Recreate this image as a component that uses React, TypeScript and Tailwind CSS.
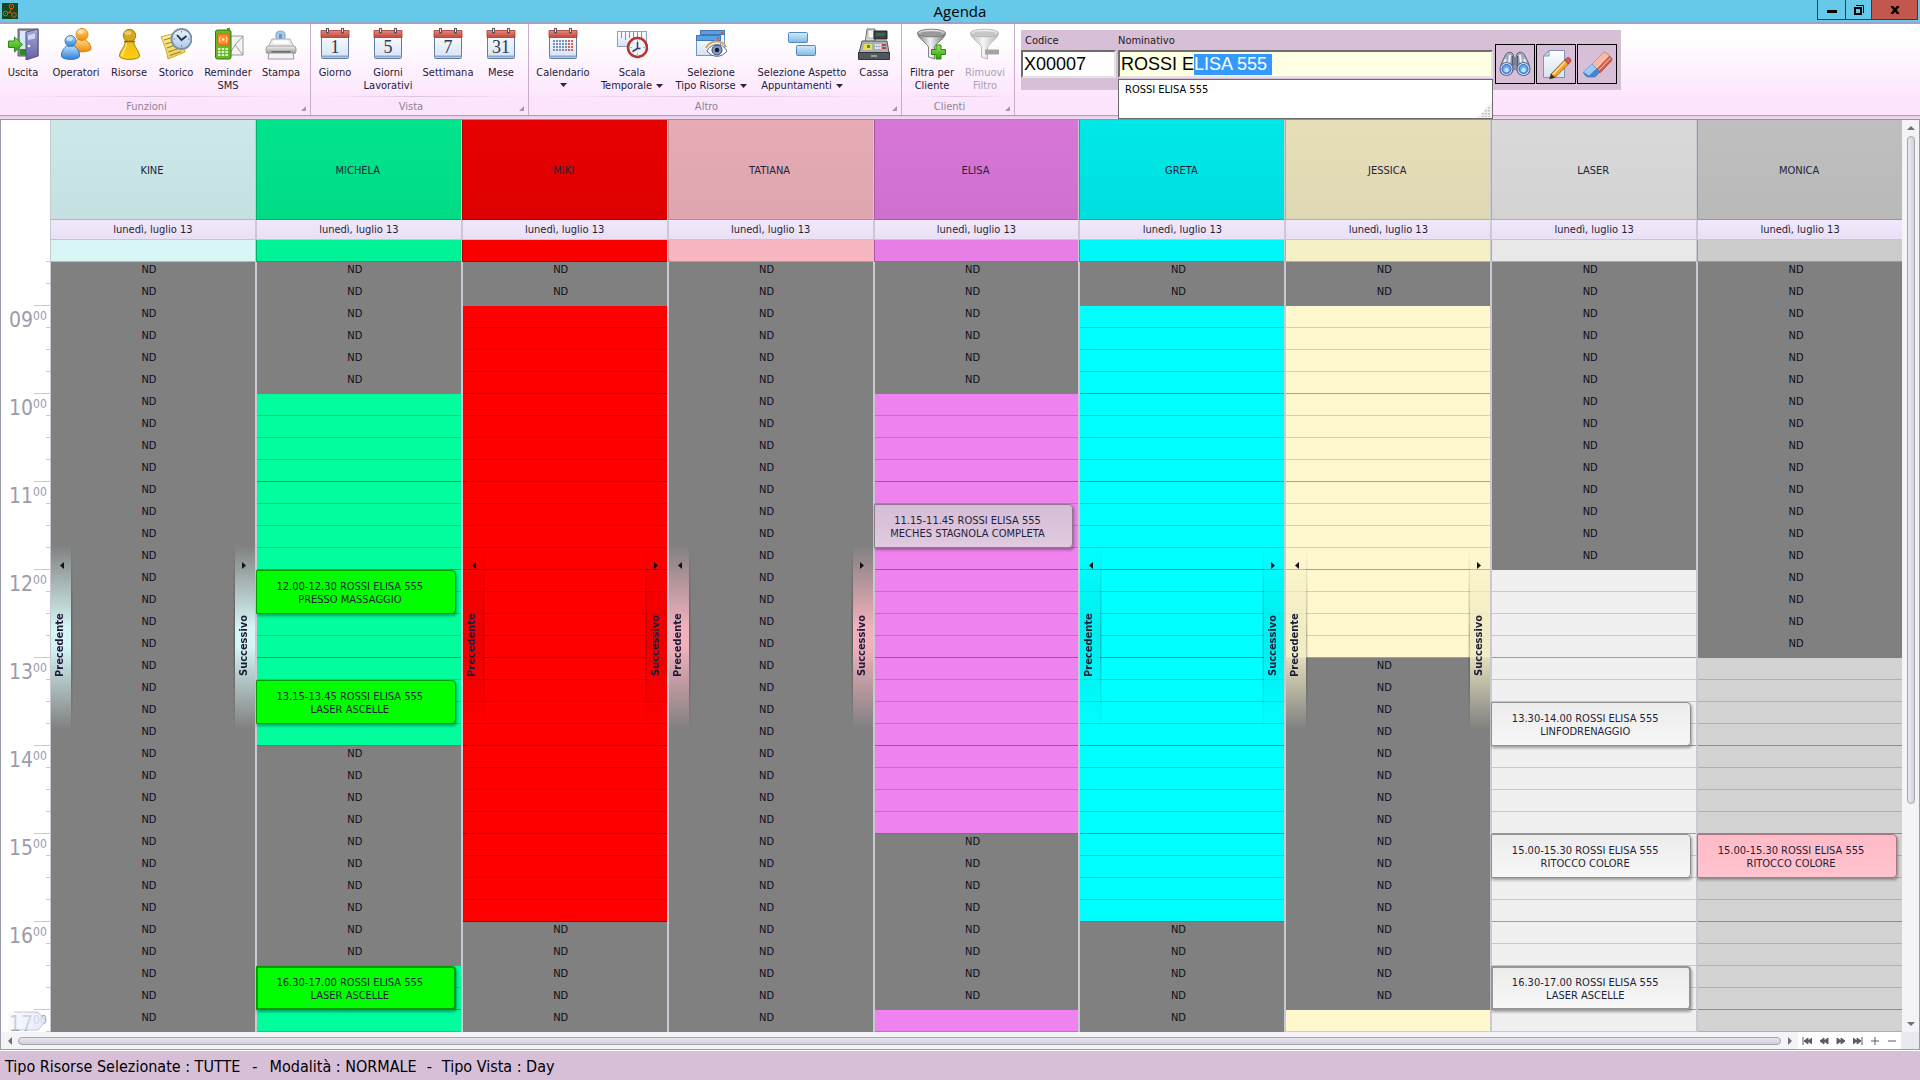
import { useEffect, useRef, type ReactNode } from "react";

const FIRST_SLOT = 8.5; // 08:30, 15-minute slots
const SLOT_COUNT = 35;

type Appointment = {
  slot: number;
  time: string;
  service: string;
  look: string;
};

type Resource = {
  name: string;
  head: string;
  allDay: string;
  free: string;
  line: string;
  hourLine: string;
  nav?: string;
  // [start, end) slot ranges that are bookable
  open: [number, number][];
  appointments?: Appointment[];
};

const greenLook = "border bg-[#00ff00] border-[#009c00]";
const whiteLook = "border bg-linear-to-b from-[#ececec] to-[#f7f7f7] border-[#8f8f8f]";

const resources: Resource[] = [
  {
    name: "KINE",
    head: "bg-linear-to-b from-[#cde8e8] to-[#c5e0e0] border-[#a5c0c0]",
    allDay: "bg-[#d8f6f6] border-[#a5c0c0]",
    free: "bg-[#e0ffff]",
    line: "border-[#b0d0d0]",
    hourLine: "border-[#90b0b0]",
    nav: "bg-[#d5f4f4]",
    open: [],
  },
  {
    name: "MICHELA",
    head: "bg-linear-to-b from-[#00e48c] to-[#00dc86] border-[#00b26c]",
    allDay: "bg-[#00f297] border-[#00b26c]",
    free: "bg-[#00ff9c]",
    line: "border-[#00d581]",
    hourLine: "border-[#00a866]",
    open: [[6, 22], [32, 35]],
    appointments: [
      { slot: 14, time: "12.00-12.30", service: "PRESSO MASSAGGIO", look: greenLook },
      { slot: 19, time: "13.15-13.45", service: "LASER ASCELLE", look: greenLook },
      { slot: 32, time: "16.30-17.00", service: "LASER ASCELLE", look: "border-2 bg-[#00ff00] border-[#009c00]" },
    ],
  },
  {
    name: "MIKI",
    head: "bg-linear-to-b from-[#e80000] to-[#de0000] border-[#b80000]",
    allDay: "bg-[#f80000] border-[#b80000]",
    free: "bg-[#ff0000]",
    line: "border-[#d50000]",
    hourLine: "border-[#a00000]",
    nav: "bg-[#ee0000]",
    open: [[2, 30]],
  },
  {
    name: "TATIANA",
    head: "bg-linear-to-b from-[#e6abb5] to-[#dfa6b0] border-[#b98a92]",
    allDay: "bg-[#f7b5c0] border-[#c8929b]",
    free: "bg-[#ffb6c1]",
    line: "border-[#d59aa4]",
    hourLine: "border-[#b0808a]",
    nav: "bg-[#f2b0bc]",
    open: [],
  },
  {
    name: "ELISA",
    head: "bg-linear-to-b from-[#d776d7] to-[#cf70cf] border-[#a85ba8]",
    allDay: "bg-[#e67ee6] border-[#a85ba8]",
    free: "bg-[#ee82ee]",
    line: "border-[#c76dc7]",
    hourLine: "border-[#a055a0]",
    open: [[6, 26], [34, 35]],
    appointments: [
      {
        slot: 11,
        time: "11.15-11.45",
        service: "MECHES STAGNOLA COMPLETA",
        look: "border bg-linear-to-b from-[#d6bdd6] to-[#dfcadf] border-[#8e7a8e]",
      },
    ],
  },
  {
    name: "GRETA",
    head: "bg-linear-to-b from-[#00e8e8] to-[#00dfdf] border-[#00b4b4]",
    allDay: "bg-[#00f7f7] border-[#00b4b4]",
    free: "bg-[#00ffff]",
    line: "border-[#00d5d5]",
    hourLine: "border-[#00a5a5]",
    nav: "bg-[#00eeee]",
    open: [[2, 30]],
  },
  {
    name: "JESSICA",
    head: "bg-linear-to-b from-[#e6dfb9] to-[#dfd8b4] border-[#b8b294]",
    allDay: "bg-[#f6f0c6] border-[#b8b294]",
    free: "bg-[#fff8cf]",
    line: "border-[#d5cfac]",
    hourLine: "border-[#a8a488]",
    nav: "bg-[#f2ecc4]",
    open: [[2, 18], [34, 35]],
  },
  {
    name: "LASER",
    head: "bg-linear-to-b from-[#d9d9d9] to-[#d3d3d3] border-[#adadad]",
    allDay: "bg-[#e8e8e8] border-[#adadad]",
    free: "bg-[#f0f0f0]",
    line: "border-[#c8c8c8]",
    hourLine: "border-[#9c9c9c]",
    open: [[14, 35]],
    appointments: [
      { slot: 20, time: "13.30-14.00", service: "LINFODRENAGGIO", look: whiteLook },
      { slot: 26, time: "15.00-15.30", service: "RITOCCO COLORE", look: whiteLook },
      {
        slot: 32,
        time: "16.30-17.00",
        service: "LASER ASCELLE",
        look: "border-2 bg-linear-to-b from-[#ececec] to-[#f7f7f7] border-[#969696]",
      },
    ],
  },
  {
    name: "MONICA",
    head: "bg-linear-to-b from-[#bfbfbf] to-[#b9b9b9] border-[#989898]",
    allDay: "bg-[#cccccc] border-[#989898]",
    free: "bg-[#d3d3d3]",
    line: "border-[#b0b0b0]",
    hourLine: "border-[#8c8c8c]",
    open: [[18, 35]],
    appointments: [
      {
        slot: 26,
        time: "15.00-15.30",
        service: "RITOCCO COLORE",
        look: "border bg-linear-to-b from-[#ffbac6] to-[#ffc4ce] border-[#a07880]",
      },
    ],
  },
];

const slots = Array.from({ length: SLOT_COUNT }, (_, i) => i);

/* ---------- icons ---------- */

function Gradients() {
  const defs: [string, string, string][] = [
    ["gBlue", "#b9defc", "#2f7fd6"],
    ["gOrange", "#ffd98a", "#f08a00"],
    ["gGold", "#e8bc20", "#ffcf10"],
    ["gGreen", "#8fe45a", "#2f9e12"],
    ["gDoor", "#a9a9dc", "#6262a4"],
    ["gRed", "#e8877c", "#c2473c"],
    ["gPaper", "#ffffff", "#d5e2f2"],
    ["gGray", "#f4f4f4", "#8c8c8c"],
    ["gSky", "#d6ecfb", "#7db8e6"],
    ["gNote", "#fdf3a8", "#eed04c"],
    ["gClock", "#eef5fc", "#a9c6e6"],
  ];
  return (
    <svg className="absolute h-0 w-0" aria-hidden="true">
      <defs>
        {defs.map(([id, from, to]) => (
          <linearGradient key={id} id={id} x1="0" y1="0" x2="0" y2="1">
            <stop offset="0" stopColor={from} />
            <stop offset="1" stopColor={to} />
          </linearGradient>
        ))}
        <linearGradient id="gSteel" x1="0" y1="0" x2="1" y2="0">
          <stop offset="0" stopColor="#7d7d7d" />
          <stop offset=".45" stopColor="#f2f2f2" />
          <stop offset="1" stopColor="#757575" />
        </linearGradient>
      </defs>
    </svg>
  );
}

function Icon({ children }: { children: ReactNode }) {
  return (
    <svg viewBox="0 0 32 32" className="h-8 w-8 shrink-0" aria-hidden="true">
      {children}
    </svg>
  );
}

const ExitIcon = () => (
  <Icon>
    <path d="M11 1h20v27H11z" fill="#8d8f9c" stroke="#5c5e6c" />
    <path d="M13 3h9v23h-9z" fill="#d4e8fb" />
    <path d="M13 21h6v6h-6z" fill="#2f8a1c" />
    <path d="M19 4l12-3v27l-12 4z" fill="url(#gDoor)" stroke="#50508a" />
    <path d="M21.500 7.500l6-1.500v4l-6 1.500z" fill="#c9d6f6" stroke="#ececff" strokeWidth=".6" />
    <circle cx="22" cy="18" r="1.300" fill="#efeffa" />
    <path d="M1.500 13h6V9l8 7.500-8 7.500v-4.500h-6z" fill="url(#gGreen)" stroke="#2c8a16" />
  </Icon>
);

const PeopleIcon = () => (
  <Icon>
    <path d="M13 22c0-7 3-8.500 5-10.500h7c2 2 6 4 6 9.500 0 3-18 4-18 1z" fill="url(#gOrange)" stroke="#d87400" />
    <circle cx="22" cy="6.500" r="6" fill="url(#gOrange)" stroke="#e08a10" />
    <path d="M1.500 28c0-6 3-8 5-10h8c2 2 5 4 5 10 0 4.500-18 4.500-18 0z" fill="url(#gBlue)" stroke="#2e72c2" />
    <circle cx="10.500" cy="13" r="5.500" fill="url(#gBlue)" stroke="#3f84cc" />
    <ellipse cx="9.500" cy="11" rx="3" ry="2" fill="#fff" opacity=".55" />
    <ellipse cx="20.500" cy="4" rx="3" ry="2" fill="#fff" opacity=".5" />
  </Icon>
);

const PawnIcon = () => (
  <Icon>
    <path d="M12.500 13h8c0 5 6 10 6 15 0 4.500-20 4.500-20 0 0-5 6-10 6-15z" fill="url(#gGold)" stroke="#a87c00" />
    <path d="M13.500 15c0 5-4 8-4.500 13" fill="none" stroke="#fff2a0" strokeWidth="1.500" opacity=".7" />
    <circle cx="16.500" cy="7.500" r="6.200" fill="#d9a818" stroke="#a87c00" />
    <ellipse cx="15" cy="5" rx="3.500" ry="2" fill="#fff" opacity=".4" />
    <path d="M11 13.500h11" stroke="#8e6800" strokeWidth="1.500" />
  </Icon>
);

const HistoryIcon = () => (
  <Icon>
    <path d="M0 0h32v32H0z" fill="#fff" />
    <path d="M1 9l18-5 6 20-17 7c-1-8-4-15-7-22z" fill="url(#gNote)" stroke="#c9a83a" />
    <path d="M4 12l13-4M5.500 16l13-4M7 20l14-5M8.500 24l14-5M10 27.500l11-4" stroke="#9a8034" strokeWidth="1.200" />
    <circle cx="21.500" cy="11" r="10" fill="url(#gClock)" stroke="#7d8ea8" strokeWidth="1.800" />
    <path d="M17 7l4.500 5 5-4" fill="none" stroke="#1e2c4c" strokeWidth="1.800" />
    <path d="M21.500 3v1.500M29.500 11H28M21.500 19v-1.500M13.500 11H15" stroke="#6c7f9e" />
  </Icon>
);

const PhoneIcon = () => (
  <Icon>
    <path d="M17 8h14v19H17z" fill="#f4f4f4" stroke="#9a9a9a" />
    <path d="M31 8l-8 9 8 10M17 27l6-10" fill="none" stroke="#9a9a9a" />
    <path d="M15 0h3v4h-3z" fill="#55a01c" />
    <rect x="3.500" y="2" width="15.500" height="29" rx="2" fill="#68b82a" stroke="#2f7a10" />
    <rect x="5.500" y="6" width="11.500" height="11" rx="1" fill="#ff8a2a" stroke="#d86400" />
    <circle cx="11.200" cy="11.500" r="1.300" fill="#fff" />
    <path d="M8.500 9c-1.300 1.500-1.300 3.500 0 5M14 9c1.300 1.500 1.300 3.500 0 5" fill="none" stroke="#fff" />
    <path d="M6 21h10M6 24h10M6 27h10" stroke="#dff2c8" strokeWidth="1.800" strokeDasharray="2.500 1.200" />
  </Icon>
);

const PrinterIcon = () => (
  <Icon>
    <path d="M11 12V6c0-4 9-4 9 0v6z" fill="#a8c8ea" stroke="#7fa4cc" />
    <path d="M14 6h3v5h-3z" fill="#6c94c4" />
    <path d="M7 11h18l4 8H3z" fill="#ececec" stroke="#b0b0b0" />
    <path d="M9 12.500h14l1 3H8z" fill="#fff" />
    <rect x="1" y="18" width="30" height="8" rx="3" fill="url(#gGray)" stroke="#a0a0a0" />
    <path d="M6 23h20l-1 2H7z" fill="#6a6a6a" />
    <path d="M4 25h24l1 6H3z" fill="#f4f4f4" stroke="#9a9a9a" />
  </Icon>
);

function CalendarBase({ children }: { children: ReactNode }) {
  return (
    <Icon>
      <rect x="2.500" y="3.500" width="27" height="27" rx="1" fill="url(#gPaper)" stroke="#5f7ba8" />
      <path d="M2.500 28.500h27" stroke="#8ba6cf" strokeWidth="2" />
      <path d="M2 2.500h28v7H2z" fill="url(#gRed)" stroke="#a8372e" strokeWidth=".8" />
      <path d="M8.500 0v5.500M23.500 0v5.500" stroke="#55575f" strokeWidth="3" />
      <path d="M8.500 1v3M23.500 1v3" stroke="#e8e8ec" />
      {children}
    </Icon>
  );
}

const DayIcon = ({ day }: { day: string }) => (
  <CalendarBase>
    <text x="16" y="25" textAnchor="middle" fontSize="18" fill="#2e3a50" className="font-['Liberation_Serif',serif]">
      {day}
    </text>
  </CalendarBase>
);

const MonthIcon = () => (
  <CalendarBase>
    <path d="M6 13h15M6 16h15M6 19h15M6 22h15" stroke="#7b90b8" strokeWidth="2" strokeDasharray="2 1" />
    <path d="M21 13h5M21 16h5M21 19h5M21 22h5" stroke="#e0604c" strokeWidth="2" strokeDasharray="2 1" />
  </CalendarBase>
);

const ScaleIcon = () => (
  <Icon>
    <rect x="1.500" y="3.500" width="29" height="15" fill="url(#gPaper)" stroke="#8aa0c4" />
    <path d="M5.500 4v6M9.500 4v8M13.500 4v6M17.500 4v6M21.500 4v8M25.500 4v6" stroke="#7f93b6" />
    <circle cx="21.500" cy="19.500" r="9.500" fill="#eef4fb" stroke="#b8352c" strokeWidth="2.500" />
    <path d="M21.500 20.500V14M21.500 20.500l-5 3M21.500 20.500h3" stroke="#34425e" strokeWidth="1.500" />
    <path d="M21.500 12.500v1M28.500 19.500h-1M21.500 26.500v-1M14.500 19.500h1" stroke="#c85048" />
  </Icon>
);

const ViewIcon = () => (
  <Icon>
    <rect x="5.500" y="2.500" width="24" height="20" fill="#eaf2fb" stroke="#6d96c6" />
    <path d="M5.500 2.500h24v4h-24z" fill="#5e9ede" stroke="#3f78b8" />
    <rect x="1.500" y="7.500" width="24" height="20" fill="url(#gPaper)" stroke="#6d96c6" />
    <path d="M1.500 7.500h24v5h-24z" fill="#5aa0e4" stroke="#3f78b8" />
    <path d="M22 9h2v2h-2zM26 4h2v2h-2z" fill="#e4502c" />
    <path d="M12 23c4-8 15-9 20 0-5 7-15 7-20 0z" fill="#fff" stroke="#56667e" />
    <path d="M11 20c4-8 16-9 20-1" fill="none" stroke="#d8a468" strokeWidth="2" />
    <circle cx="22" cy="22" r="5" fill="#7f9ac4" stroke="#3c4c6a" />
    <circle cx="22" cy="22" r="2.200" fill="#141c2e" />
  </Icon>
);

const AspectIcon = () => (
  <Icon>
    <rect x="2.500" y="4.500" width="19" height="10" rx="1" fill="url(#gSky)" stroke="#4f8ac0" />
    <rect x="10.500" y="17.500" width="19" height="10" rx="1" fill="url(#gSky)" stroke="#4f8ac0" />
  </Icon>
);

const CashIcon = () => (
  <Icon>
    <path d="M7 15L9 1h8v14z" fill="#d4d8dc" stroke="#70767c" />
    <path d="M10 2h6v8h-6z" fill="#f6f6f6" stroke="#a0a0a0" strokeWidth=".6" />
    <path d="M16 3h13v8H16z" fill="#3a4246" stroke="#20262a" />
    <path d="M18 5h9v3h-9z" fill="#2f6e40" />
    <path d="M4 13h25l2 12H1z" fill="#aab0b6" stroke="#4c5258" />
    <path d="M6 16h8v6H5z" fill="#e8e054" />
    <path d="M9 17h3v3H9z" fill="#3c9c3c" />
    <path d="M17 17h6M17 20h6" stroke="#eef2f6" strokeWidth="2" strokeDasharray="1.500 .7" />
    <path d="M24 17h4M24 20h4" stroke="#cc3c34" strokeWidth="2" />
    <path d="M.5 24.500h31v7H.5z" fill="#50585e" stroke="#2e3438" />
    <path d="M13 28h6" stroke="#dfe3e6" />
  </Icon>
);

const FunnelIcon = ({ add }: { add?: boolean }) => (
  <Icon>
    <g opacity={add ? 1 : 0.55}>
      <path d="M1.500 5c0 5 10 11 11 14v10l6 2V19c1-3 11-9 11-14z" fill="url(#gSteel)" stroke="#6a6a6a" strokeWidth=".8" />
      <ellipse cx="15.500" cy="5" rx="14" ry="3.800" fill="url(#gGray)" stroke="#7a7a7a" />
      <ellipse cx="15.500" cy="5.500" rx="11" ry="2.300" fill="#9a9a9a" />
    </g>
    {add ? (
      <path d="M20 17h5v4.500h4.500v5H25V31h-5v-4.500h-4.500v-5H20z" fill="url(#gGreen)" stroke="#2c8a16" />
    ) : (
      <path d="M16 21.500h14v5H16z" fill="#a4a4a4" />
    )}
  </Icon>
);

const BinocularsIcon = () => (
  <Icon>
    <path d="M6 8c1-4 6-5 8-2l1 4v12H1.500C1 17 4 12 6 8zM26 8c-1-4-6-5-8-2l-1 4v12h13.500C31 17 28 12 26 8z" fill="#a4abbc" stroke="#586078" />
    <path d="M7 11l-4 8M11 7l-1 8M21 7l1 8M25 11l4 8" stroke="#eef1f7" strokeWidth="2" />
    <path d="M13.500 8v10M18.500 8v10" stroke="#565c70" strokeWidth="1.500" />
    <path d="M14 9h4v8h-4z" fill="#7b8296" />
    <circle cx="7.500" cy="21" r="6.500" fill="#dfe8f6" stroke="#5b6a90" strokeWidth="1.200" />
    <circle cx="24.500" cy="21" r="6.500" fill="#dfe8f6" stroke="#5b6a90" strokeWidth="1.200" />
    <circle cx="7.500" cy="21" r="4.500" fill="#6fa3f0" stroke="#2c5cc4" />
    <circle cx="24.500" cy="21" r="4.500" fill="#5cb0f0" stroke="#2c62c4" />
    <circle cx="7.500" cy="22" r="2.200" fill="#c8e0ff" />
    <circle cx="24.500" cy="22" r="2.200" fill="#c4eaff" />
  </Icon>
);

const EditIcon = () => (
  <Icon>
    <path d="M9 2.500h15.500v27h-21V8z" fill="url(#gPaper)" stroke="#7f94b8" />
    <path d="M9 2.500V8H3.500z" fill="#c8d8ee" stroke="#7f94b8" />
    <path d="M11 26L24.500 12l4 4-13.500 13.500z" fill="#f6a42e" stroke="#8c5a14" strokeWidth=".8" />
    <path d="M12.500 27L25.500 13.500" stroke="#ffe09a" strokeWidth="1.500" />
    <path d="M24.500 12l3-2.500c1.500-.5 4 2 3.500 3.500L28.500 16z" fill="#d8584a" stroke="#8e3028" strokeWidth=".7" />
    <path d="M9.500 31l1.500-5 4 3.500z" fill="#3a2c20" stroke="#5a4028" strokeWidth=".6" />
  </Icon>
);

const EraserIcon = () => (
  <Icon>
    <path d="M11 16L22 5c1.500-1 2-1 3.500 0l5 5c.7 1 .7 2 0 3L19 25z" fill="#d65a48" stroke="#b04436" strokeWidth=".6" />
    <path d="M11 16L22 5c1.500-1 2-1 3.500 0l2.500 3-12 12.500z" fill="#f8b8a4" />
    <path d="M15 20L27 7.500M17 23L29.500 10" stroke="#fbd8cc" />
    <path d="M2.500 24l8.500-8 8 8-5 5H6.500c-2-1-3.500-2.500-4-5z" fill="#4a86d0" stroke="#3468ac" strokeWidth=".6" />
    <path d="M2.500 24l8.500-8 4.500 4.500L8 27.500z" fill="#9accf6" />
  </Icon>
);

/* ---------- ribbon ---------- */

function Caret({ className = "" }: { className?: string }) {
  return (
    <svg viewBox="0 0 7 4" className={`h-1 w-[7px] ${className}`} aria-hidden="true">
      <path d="M0 0h7L3.500 4z" fill="#2b2340" />
    </svg>
  );
}

type ToolProps = {
  icon: ReactNode;
  lines: string[];
  width: string;
  menu?: boolean;
  disabled?: boolean;
};

function Tool({ icon, lines, width, menu, disabled }: ToolProps) {
  return (
    <button
      type="button"
      disabled={disabled}
      className={`flex flex-col items-center whitespace-nowrap pt-1 leading-[13px] ${width} ${
        disabled ? "text-[#a79fb0]" : "text-[#1f1a38]"
      }`}
    >
      {icon}
      <span className="mt-1.5">{lines[0]}</span>
      {lines[1] ? (
        <span className="flex items-center gap-1">
          {lines[1]}
          {menu && <Caret />}
        </span>
      ) : (
        menu && <Caret className="mt-1" />
      )}
    </button>
  );
}

function Group({ title, pad, width, children }: { title: string; pad: string; width: string; children: ReactNode }) {
  return (
    <section className={`flex shrink-0 flex-col border-r border-[#c9a9cc] ${width}`}>
      <div className={`flex h-[72px] ${pad}`}>{children}</div>
      <div className="mx-2 h-px bg-linear-to-r from-transparent via-[#d9c6dc] to-transparent" />
      <div className="flex flex-1 items-end">
        <h2 className="flex-1 self-center pt-0.5 pr-2 text-center text-[#8b8494]">{title}</h2>
        <svg viewBox="0 0 5 5" className="mr-1 mb-1 h-[5px] w-[5px]" aria-hidden="true">
          <path d="M5 0v5H0z" fill="#a596ac" />
        </svg>
      </div>
    </section>
  );
}

function ClientSearch() {
  const nameRef = useRef<HTMLInputElement>(null);

  useEffect(() => {
    nameRef.current?.focus();
    nameRef.current?.setSelectionRange(7, 16);
  }, []);

  const field =
    "h-7 w-full border-2 border-t-[#6d6d6d] border-l-[#6d6d6d] border-r-[#e3e3e3] border-b-[#e3e3e3] pl-px font-['Liberation_Sans',Arial,sans-serif] text-lg leading-6 text-black outline-none";
  const square = "flex h-10 w-10 items-center justify-center border border-black";

  return (
    <div className="mt-1.5 ml-1.5 flex h-[60px] bg-[#d8bfd8] pr-1 text-[#1a1a1a]">
      <div className="w-[95px]">
        <label htmlFor="codice" className="block h-5 pt-px pl-1 leading-5">Codice</label>
        <input id="codice" defaultValue="X00007" className={`${field} bg-white`} />
      </div>
      <div className="relative ml-0.5 w-[375px]">
        <label htmlFor="nominativo" className="block h-5 pt-px leading-5">Nominativo</label>
        <input
          id="nominativo"
          ref={nameRef}
          defaultValue="ROSSI ELISA 555 "
          autoComplete="off"
          className={`${field} bg-[#ffffe1] selection:bg-[#3399ff] selection:text-white`}
        />
        <ul
          role="listbox"
          className="absolute top-[49px] left-0 z-10 h-10 w-full border border-[#6a6a6a] bg-white px-1.5 leading-5 text-black"
        >
          <li role="option" aria-selected="false">ROSSI ELISA 555</li>
          <svg viewBox="0 0 16 16" className="absolute right-0 bottom-0 h-4 w-4" aria-hidden="true">
            <path d="M16 0v16H0z" fill="#f0f0f0" />
            <path d="M13 5v10M10 8v7M7 11v4" stroke="#b4b4b4" strokeWidth="1.500" strokeDasharray="1.500 1.500" />
          </svg>
        </ul>
      </div>
      <div className="mt-3.5 ml-0.5 flex gap-px">
        <button type="button" aria-label="Cerca cliente" className={square}><BinocularsIcon /></button>
        <button type="button" aria-label="Modifica cliente" className={square}><EditIcon /></button>
        <button type="button" aria-label="Cancella" className={square}><EraserIcon /></button>
      </div>
    </div>
  );
}

function Ribbon() {
  return (
    <div className="h-24">
      <div className="flex h-[92px] border-b border-[#b39cb8] bg-linear-to-b from-white from-15% to-[#fde4fd] to-85%">
        <Group title="Funzioni" pad="pl-[3px]" width="w-[311px]">
          <Tool icon={<ExitIcon />} lines={["Uscita"]} width="w-10" />
          <Tool icon={<PeopleIcon />} lines={["Operatori"]} width="w-[66px]" />
          <Tool icon={<PawnIcon />} lines={["Risorse"]} width="w-10" />
          <Tool icon={<HistoryIcon />} lines={["Storico"]} width="w-[54px]" />
          <Tool icon={<PhoneIcon />} lines={["Reminder", "SMS"]} width="w-[50px]" />
          <Tool icon={<PrinterIcon />} lines={["Stampa"]} width="w-14" />
        </Group>
        <Group title="Vista" pad="pl-0" width="w-[218px]">
          <Tool icon={<DayIcon day="1" />} lines={["Giorno"]} width="w-12" />
          <Tool icon={<DayIcon day="5" />} lines={["Giorni", "Lavorativi"]} width="w-[58px]" />
          <Tool icon={<DayIcon day="7" />} lines={["Settimana"]} width="w-[62px]" />
          <Tool icon={<DayIcon day="31" />} lines={["Mese"]} width="w-11" />
        </Group>
        <Group title="Altro" pad="pl-1" width="w-[373px]">
          <Tool icon={<MonthIcon />} lines={["Calendario"]} width="w-[60px]" menu />
          <Tool icon={<ScaleIcon />} lines={["Scala", "Temporale"]} width="w-[78px]" menu />
          <Tool icon={<ViewIcon />} lines={["Selezione", "Tipo Risorse"]} width="w-20" menu />
          <Tool icon={<AspectIcon />} lines={["Selezione Aspetto", "Appuntamenti"]} width="w-[102px]" menu />
          <Tool icon={<CashIcon />} lines={["Cassa"]} width="w-[42px]" />
        </Group>
        <Group title="Clienti" pad="pl-[3px]" width="w-[113px]">
          <Tool icon={<FunnelIcon add />} lines={["Filtra per", "Cliente"]} width="w-[54px]" />
          <Tool icon={<FunnelIcon />} lines={["Rimuovi", "Filtro"]} width="w-[52px]" disabled />
        </Group>
        <ClientSearch />
      </div>
      <div className="h-1 border-b border-[#958fa2] bg-linear-to-b from-[#e3c8e3] to-[#f3dff3]" />
    </div>
  );
}

/* ---------- scheduler ---------- */

function TimeAxis() {
  return (
    <div className="relative w-[50px] shrink-0 border-r border-[#c8c8d2] bg-white text-[#9c9caa]">
      <div className="flex h-[142px] items-end justify-end">
        <div className="h-px w-1 bg-[#c8c8d2]" />
      </div>
      {slots.map((i) => (
        <div key={i} className="flex h-[22px] items-end justify-end">
          {i % 4 === 2 && (
            <div className="flex flex-1 self-start pt-1 pl-2">
              <span className="text-[21px] leading-[20px]">{String(FIRST_SLOT + i / 4).padStart(2, "0")}</span>
              <span className="text-xs leading-3">00</span>
            </div>
          )}
          <div className={`h-px bg-[#c8c8d2] ${i % 4 === 1 ? "w-4" : "w-1"} ${i % 4 === 2 ? "-ml-1" : ""}`} />
        </div>
      ))}
      <svg viewBox="0 0 40 22" className="absolute right-0.5 bottom-0 h-[22px] w-10" aria-hidden="true">
        <defs>
          <linearGradient id="now" x1="0" y1="0" x2="1" y2="0">
            <stop offset="0" stopColor="#f4f6fc" stopOpacity=".5" />
            <stop offset="1" stopColor="#dfe5fa" stopOpacity=".85" />
          </linearGradient>
        </defs>
        <path d="M0 2h30l8 9-8 9H0z" fill="url(#now)" />
        <path d="M6 2h24l8 9-8 9H6" fill="none" stroke="#a8b0c8" opacity=".7" />
      </svg>
    </div>
  );
}

function SideNav({ side, label, color }: { side: "left" | "right"; label: string; color: string }) {
  const left = side === "left";
  return (
    <button
      type="button"
      aria-label={label}
      className={`absolute top-[283px] h-[184px] w-[22px] ${left ? "left-0" : "right-0"}`}
    >
      <div
        className={`absolute inset-0 overflow-hidden mask-[linear-gradient(to_bottom,transparent,black_45%,black_55%,transparent)] ${
          left ? "pr-0.5" : "pl-0.5"
        }`}
      >
        <div className={`h-full shadow-[0_0_3px_rgba(0,0,0,0.6)] ${color}`} />
      </div>
      <div className="relative flex h-full flex-col items-center pt-[17px]">
        <svg viewBox="0 0 4 7" className="h-[7px] w-1" aria-hidden="true">
          <path d={left ? "M4 0v7L0 3.500z" : "M0 0v7l4-3.500z"} fill="#111" />
        </svg>
        <span
          className={`absolute top-[68px] flex h-[64px] w-3.5 rotate-180 items-center justify-center font-bold leading-3.5 text-[#1c1a36] [writing-mode:vertical-rl] ${
            left ? "left-0.5" : "left-1"
          }`}
        >
          {label}
        </span>
      </div>
    </button>
  );
}

function Column({ r }: { r: Resource }) {
  const isOpen = (i: number) => r.open.some(([a, b]) => i >= a && i < b);

  return (
    <div className="min-w-0 flex-1 border-r-2 border-[#cac8d2] last:border-r-0">
      <div className={`-ml-px flex h-[100px] items-center justify-center border-b border-l pt-1 pr-0.5 text-[#23233a] ${r.head}`}>
        {r.name}
      </div>
      <div className="flex h-5 items-center justify-center border-b border-[#c8c5d2] bg-linear-to-b from-[#f0e8fa] to-[#eae0f6] pt-0.5 text-[#1f1f38]">
        lunedì, luglio 13
      </div>
      <div className={`-ml-px h-[22px] border-b border-l ${r.allDay}`} />
      <div className="relative">
        {slots.map((i) =>
          isOpen(i) ? (
            <div key={i} className={`h-[22px] border-b ${r.free} ${i % 4 === 1 ? r.hourLine : r.line}`} />
          ) : (
            <div key={i} className="h-[22px] bg-[#808080] pr-2 text-center leading-[15px] text-[#0c0c18]">
              ND
            </div>
          ),
        )}
        {r.appointments?.map((a) => (
          <div
            key={a.slot}
            style={{ top: a.slot * 22 }}
            className={`absolute right-[5px] -left-px flex h-11 flex-col justify-center rounded-r pt-0.5 pr-3 text-center leading-[13px] whitespace-nowrap text-[#1f1f38] shadow-[1px_2px_3px_rgba(0,0,0,0.35)] ${a.look}`}
          >
            <span>{a.time} ROSSI ELISA 555</span>
            <span>{a.service}</span>
          </div>
        ))}
        {r.nav && <SideNav side="left" label="Precedente" color={r.nav} />}
        {r.nav && <SideNav side="right" label="Successivo" color={r.nav} />}
      </div>
    </div>
  );
}

const pagerIcons: [string, string][] = [
  ["Inizio", "M1 1v8M6 2v6L2 5zM10 2v6L6 5z"],
  ["Indietro", "M5 2v6L1 5zM9 2v6L5 5z"],
  ["Avanti", "M1 2v6l4-3zM5 2v6l4-3z"],
  ["Fine", "M0 2v6l4-3zM4 2v6l4-3zM9 1v8"],
  ["Aggiungi", "M5 1v8M1 5h8"],
  ["Togli", "M1 5h8"],
];

function Arrow({ d }: { d: string }) {
  return (
    <svg viewBox="0 0 8 8" className="h-2 w-2" aria-hidden="true">
      <path d={d} fill="#6f6f80" />
    </svg>
  );
}

function Scheduler() {
  return (
    <main className="flex flex-1 flex-col border-x border-b border-[#9a9aa8]">
      <div className="flex flex-1">
        <TimeAxis />
        <div className="flex min-w-0 flex-1">
          {resources.map((r) => (
            <Column key={r.name} r={r} />
          ))}
        </div>
        <div className="flex w-[17px] shrink-0 flex-col items-center bg-[#f4f4f7] py-1">
          <Arrow d="M4 2l4 4H0z" />
          <div className="mt-1 h-[668px] w-2 rounded-full border border-[#a4a4b2] bg-linear-to-r from-[#e8e8ee] to-[#d4d4dc]" />
          <div className="flex-1" />
          <Arrow d="M4 6l4-4H0z" />
        </div>
      </div>
      <div className="flex h-[17px] items-center bg-[#f4f4f6]">
        <div className="flex w-[17px] justify-center">
          <Arrow d="M2 4l4-4v8z" />
        </div>
        <div className="h-2 flex-1 rounded-full border border-[#a4a4b2] bg-linear-to-b from-[#e8e8ee] to-[#cfcfd8]" />
        <div className="flex w-[17px] justify-center">
          <Arrow d="M6 4L2 0v8z" />
        </div>
        <div className="flex h-full items-center bg-white pr-px">
          {pagerIcons.map(([label, d]) => (
            <button key={label} type="button" aria-label={label} className="flex w-[17px] justify-center">
              <svg viewBox="0 0 10 10" className="h-2.5 w-2.5" aria-hidden="true">
                <path d={d} fill="#5a5a66" stroke="#5a5a66" />
              </svg>
            </button>
          ))}
        </div>
        <div className="h-full w-[18px] bg-[#e9e9f0]" />
      </div>
    </main>
  );
}

function TitleBar() {
  return (
    <header className="relative flex h-6 items-start justify-between border-b-2 border-[#9aa4c6] bg-[#66c9ea]">
      <svg viewBox="0 0 16 16" className="mt-[3px] ml-0.5 h-4 w-4" aria-hidden="true">
        <path d="M0 0h16v16H0z" fill="#14461f" />
        <g fill="none" stroke="#d2601c">
          <circle cx="9.500" cy="3.500" r="2.300" />
          <circle cx="3.500" cy="10.500" r="2.300" />
          <circle cx="12" cy="12" r="2.300" />
          <path d="M9.500 5.500L8 9M5.500 10l3-1 2 2M9.500 3v1M3.500 10v1M12 12v.5" />
        </g>
      </svg>
      <h1 className="absolute inset-x-0 text-center font-['Open_Sans','Noto_Sans',sans-serif] text-[15px] leading-[22px] text-black">
        Agenda
      </h1>
      <div className="relative mr-0.5 flex h-5 border-x border-b border-[#27404a]">
        <button type="button" aria-label="Riduci a icona" className="flex w-7 items-end justify-center border-r border-[#27404a] pb-1.5">
          <span className="h-[3px] w-2.5 bg-black" />
        </button>
        <button type="button" aria-label="Ripristina" className="flex w-[25px] items-center justify-center">
          <svg viewBox="0 0 10 10" className="h-2.5 w-2.5" aria-hidden="true">
            <path d="M1 3h6v6H1z" fill="none" stroke="#000" strokeWidth="2" />
            <path d="M2 .5h7.500V8" fill="none" stroke="#000" />
          </svg>
        </button>
        <button type="button" aria-label="Chiudi" className="flex w-[46px] items-center justify-center border-l border-[#27404a] bg-[#c2574d]">
          <svg viewBox="0 0 10 8" className="h-2 w-2.5" aria-hidden="true">
            <path d="M1.500 0l7 8M8.500 0l-7 8" stroke="#000" strokeWidth="2.500" />
          </svg>
        </button>
      </div>
    </header>
  );
}

export default function App() {
  return (
    <div className="flex min-h-screen flex-col bg-white font-['DejaVu_Sans_Condensed','Noto_Sans',sans-serif] text-[11px]">
      <Gradients />
      <TitleBar />
      <Ribbon />
      <Scheduler />
      <footer className="mt-px flex h-[29px] items-center gap-2.5 bg-[#d8bfd8] pt-0.5 pl-[5px] text-base text-black">
        <span>Tipo Risorse Selezionate : TUTTE</span>
        <span className="px-0.5">-</span>
        <span>Modalità : NORMALE</span>
        <span>-</span>
        <span>Tipo Vista : Day</span>
      </footer>
    </div>
  );
}
